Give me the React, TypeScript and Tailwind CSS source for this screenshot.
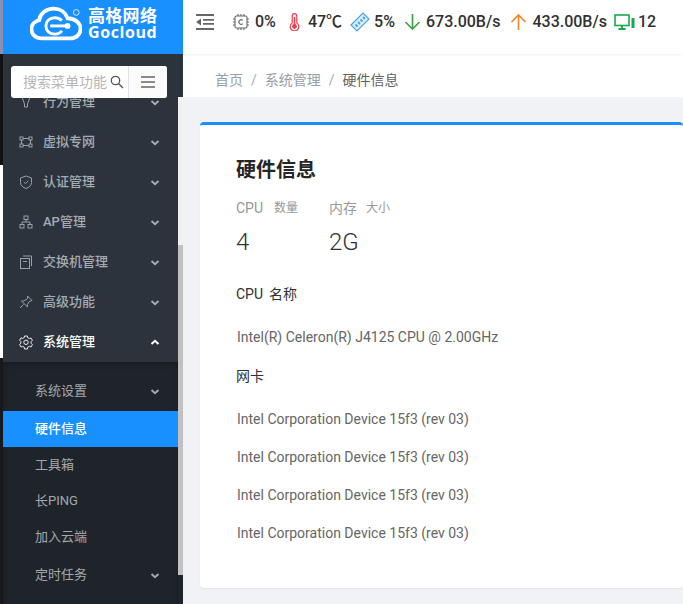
import React from "react";

const FONT = "font-['Roboto','Noto_Sans_CJK_SC',sans-serif]";

const Chevron = ({ up = false, className = "" }: { up?: boolean; className?: string }) => (
  <svg width="10" height="7" viewBox="0 0 10 7" fill="none" className={className}>
    <path d={up ? "M1.5 5L5 1.8L8.5 5" : "M1.5 2L5 5.2L8.5 2"} stroke="currentColor" strokeWidth="2" />
  </svg>
);

const icons: Record<string, React.ReactNode> = {
  bulb: <path d="M3 2h8l-2.5 7v3h-3V9z" />,
  vpn: (
    <>
      <rect x="1" y="2" width="3" height="3" />
      <rect x="10" y="2" width="3" height="3" />
      <rect x="1" y="9" width="3" height="3" />
      <rect x="10" y="9" width="3" height="3" />
      <path d="M4 3.5h6M4 10.5h6M2.5 5v4M11.5 5v4" />
    </>
  ),
  shield: (
    <>
      <path d="M7 1l5.5 2v4.5c0 3-2.5 5-5.5 6-3-1-5.5-3-5.5-6V3z" />
      <path d="M4.8 7l1.7 1.7 2.8-3" />
    </>
  ),
  tree: (
    <>
      <rect x="5" y="1" width="4" height="3.5" />
      <rect x="1" y="9.5" width="4" height="3.5" />
      <rect x="9" y="9.5" width="4" height="3.5" />
      <path d="M7 4.5V7M3 9.5V7h8v2.5" />
    </>
  ),
  copy: (
    <>
      <rect x="1.5" y="3.5" width="9" height="10" />
      <path d="M4 1h8.5v10M4 6.5h4" />
    </>
  ),
  pin: <path d="M8.5 1L13 5.5l-2.5.8-2.2 3.4.2 2.3-6-6 2.4-.1 3.6-2.2zM4.5 9.5L1 13" />,
  gear: (
    <>
      <path d="M5.6 1h2.8l.4 1.8 1.5.8 1.7-.6 1.4 2.4-1.3 1.3v1.6l1.3 1.3-1.4 2.4-1.7-.6-1.5.8-.4 1.8H5.6l-.4-1.8-1.5-.8-1.7.6L.6 9.4l1.3-1.3V6.5L.6 5.2 2 2.8l1.7.6 1.5-.8z" />
      <circle cx="7" cy="7.3" r="2.2" />
    </>
  ),
};

const MenuRow = ({ icon, label, open = false }: { icon: string; label: string; open?: boolean }) => (
  <div className={`flex h-10 items-center pl-4 pr-[18px] text-[13px] font-medium ${open ? "text-white" : "text-[#a5acb4]"}`}>
    <svg width="14" height="15" viewBox="0 0 14 15" fill="none" stroke="currentColor" strokeWidth="1" className="mr-[10px] shrink-0 opacity-90">
      {icons[icon]}
    </svg>
    <span className="flex-1">{label}</span>
    <Chevron up={open} />
  </div>
);

const SubRow = ({ label, active = false, arrow = false }: { label: string; active?: boolean; arrow?: boolean }) => (
  <div
    className={`flex items-center pl-8 pr-[18px] text-[13px] ${arrow ? "h-10" : "h-9"} ${
      active ? "bg-[#1890ff] font-medium text-white" : "text-[#a3a8ad]"
    }`}
  >
    <span className="flex-1">{label}</span>
    {arrow && <Chevron />}
  </div>
);

const Logo = () => (
  <div className="flex h-[54px] shrink-0 items-center bg-[#1890ff] pb-[7px] pl-[27px] text-white">
    <svg width="52" height="36" viewBox="0 0 54 36" className="mr-[6px] shrink-0">
      <path
        d="M12 33C5.5 33 1.5 28.5 1.5 23.5C1.5 18.5 5 15 9.5 14C10.5 7 17 2 24.5 2C31.5 2 37 6 39 12C46.5 12 52.5 17 52.5 23C52.5 29 47.5 33 42 33Z"
        fill="none"
        stroke="#fff"
        strokeWidth="4"
      />
      <path d="M33 14.5C31 12.5 28.5 11.5 25.5 11.5C20.5 11.5 16.5 15 16.5 20C16.5 25 20.5 28.5 25.5 28.5C28.5 28.5 31.5 27.5 33 25" fill="none" stroke="#fff" strokeWidth="3" />
      <path d="M21 20H38" stroke="#fff" strokeWidth="3" />
      <circle cx="39" cy="20" r="3" fill="#fff" />
      <circle cx="48" cy="6" r="3" fill="none" stroke="#fff" strokeWidth="0.8" />
    </svg>
    <div className="flex flex-col">
      <span className="text-[17px] leading-[16px] font-bold tracking-[0.3px]">高格网络</span>
      <span className="font-['Open_Sans',sans-serif] text-[16px] leading-[16px] font-bold tracking-[0.6px]">Gocloud</span>
    </div>
  </div>
);

const Sidebar = () => (
  <aside className="flex h-full w-[180px] shrink-0 flex-col">
    <Logo />
    <div className="relative flex min-h-0 flex-1 overflow-hidden bg-[#2c333c]">
      <div className="w-[175px] shrink-0 pt-[28px]">
        <MenuRow icon="bulb" label="行为管理" />
        <MenuRow icon="vpn" label="虚拟专网" />
        <MenuRow icon="shield" label="认证管理" />
        <MenuRow icon="tree" label="AP管理" />
        <MenuRow icon="copy" label="交换机管理" />
        <MenuRow icon="pin" label="高级功能" />
        <MenuRow icon="gear" label="系统管理" open />
        <div className="bg-[#1f242b] pt-[9px] pb-[20px] shadow-[inset_0_2px_6px_rgba(0,0,0,0.25)]">
          <SubRow label="系统设置" arrow />
          <SubRow label="硬件信息" active />
          <SubRow label="工具箱" />
          <SubRow label="长PING" />
          <SubRow label="加入云端" />
          <SubRow label="定时任务" arrow />
        </div>
      </div>
      <div className="flex w-[5px] shrink-0 flex-col bg-[#1f242b]">
        <div className="h-[191px] bg-[#f1f1f1]" />
        <div className="h-[330px] bg-[#c1c1c1]" />
      </div>
      <div className="absolute top-0 left-0 h-[43px] w-full bg-[#2c333c] pt-[12px] pl-[8px]">
        <div className="flex h-8 w-[156px] overflow-hidden rounded-[3px] bg-white">
          <div className="flex w-[118px] items-center border-r border-[#dcdfe6] pl-3 text-[14px] text-[#b5b5b5]">
            <span className="whitespace-nowrap">搜索菜单功能</span>
            <svg width="14" height="14" viewBox="0 0 14 14" fill="none" stroke="#555" strokeWidth="1.3" className="ml-[3px] shrink-0">
              <circle cx="5.5" cy="5.5" r="4.2" />
              <path d="M8.7 8.7L13 13" />
            </svg>
          </div>
          <div className="flex flex-1 items-center justify-center bg-[#fbfbfb]">
            <svg width="14" height="12" viewBox="0 0 14 12" stroke="#666" strokeWidth="1.3">
              <path d="M0 1h14M0 6h14M0 11h14" />
            </svg>
          </div>
        </div>
      </div>
    </div>
  </aside>
);

const Stat = ({ icon, text, gap, ml }: { icon: React.ReactNode; text: string; gap: string; ml: string }) => (
  <div className={`flex items-center ${ml}`}>
    <span className={`flex ${gap}`}>{icon}</span>
    <span className="text-[16px] leading-none font-medium text-[#303133]">{text}</span>
  </div>
);

const Header = () => (
  <header className="z-10 flex h-[54px] shrink-0 items-center bg-white pb-[10px] pl-[13px] shadow-[0_1px_3px_rgba(0,0,0,0.06)]">
    <svg width="18" height="16" viewBox="0 0 18 16" fill="#666" className="mr-[18px] shrink-0">
      <path d="M0 0h18v2H0zM7 5h11v1.8H7zM7 9h11v1.8H7zM0 14h18v2H0zM0 8l5-3.5v7z" />
    </svg>
    <Stat
      ml=""
      gap="mr-[5px]"
      text="0%"
      icon={
        <svg width="18" height="18" viewBox="0 0 18 18" fill="none" stroke="#666" strokeWidth="1.1">
          <rect x="3" y="3" width="12" height="12" rx="1.5" />
          <path d="M6 1v2M9 1v2M12 1v2M6 15v2M9 15v2M12 15v2M1 6h2M1 9h2M1 12h2M15 6h2M15 9h2M15 12h2" />
          <path d="M10.8 7.3A2.3 2.3 0 1 0 10.8 10.7" />
        </svg>
      }
    />
    <Stat
      ml="ml-[13px]"
      gap="mr-[8px]"
      text="47℃"
      icon={
        <svg width="11" height="18" viewBox="0 0 11 18" fill="none" stroke="#e8404f" strokeWidth="1.2">
          <path d="M3.2 10V3a2.3 2.3 0 0 1 4.6 0v7a4.3 4.3 0 1 1-4.6 0z" />
          <circle cx="5.5" cy="13.5" r="1.8" fill="#e8404f" />
          <path d="M5.5 4v9" strokeWidth="1.6" />
        </svg>
      }
    />
    <Stat
      ml="ml-[8px]"
      gap="mr-[4px]"
      text="5%"
      icon={
        <svg width="20" height="20" viewBox="0 0 20 20" fill="none" stroke="#4aa3e0" strokeWidth="1.2">
          <path d="M1 13L13 1l6 6L7 19z" fill="#d9eefb" />
          <path d="M5.5 12.5l2 2M8 10l2 2M10.5 7.5l2 2M13 5l2 2" strokeWidth="1.8" />
        </svg>
      }
    />
    <Stat
      ml="ml-[9px]"
      gap="mr-[5px]"
      text="673.00B/s"
      icon={
        <svg width="17" height="18" viewBox="0 0 17 18" fill="none" stroke="#43a047" strokeWidth="1.7">
          <path d="M8.5 1v15M1.5 9l7 7 7-7" />
        </svg>
      }
    />
    <Stat
      ml="ml-[10px]"
      gap="mr-[5px]"
      text="433.00B/s"
      icon={
        <svg width="17" height="18" viewBox="0 0 17 18" fill="none" stroke="#f08a2c" strokeWidth="1.7">
          <path d="M8.5 17V2M1.5 9l7-7 7 7" />
        </svg>
      }
    />
    <Stat
      ml="ml-[7px]"
      gap="mr-[3px]"
      text="12"
      icon={
        <svg width="21" height="16" viewBox="0 0 21 16" fill="none" stroke="#19a84c" strokeWidth="1.6">
          <rect x="1" y="1" width="14" height="10.5" />
          <path d="M8 12v2M4.5 15h7" strokeWidth="1.8" />
          <rect x="17.5" y="4" width="3" height="10" fill="#19a84c" stroke="none" />
        </svg>
      }
    />
  </header>
);

const Breadcrumb = () => (
  <div className="flex h-[43px] shrink-0 items-center bg-white pt-[10px] pl-8 text-[14px] text-[#97a0a8]">
    <span>首页</span>
    <span className="mx-[8px] text-[#a8abb2]">/</span>
    <span>系统管理</span>
    <span className="mx-[8px] text-[#a8abb2]">/</span>
    <span className="text-[#606266]">硬件信息</span>
  </div>
);

const lines = ["a", "b", "c", "d"];

const HardwareCard = () => (
  <section className="h-[466px] rounded-[4px] border-t-[3px] border-[#1890ff] bg-white pt-[31px] pl-9 shadow-[0_1px_2px_rgba(0,0,0,0.05)]">
    <h1 className="text-[20px] leading-[28px] font-bold text-[#262626]">硬件信息</h1>
    <div className="mt-[14px] flex text-[#999]">
      <div className="w-[93px]">
        <div className="flex items-center text-[14px] leading-[20px]">
          <span>CPU</span>
          <span className="ml-[11px] text-[12px]">数量</span>
        </div>
        <div className="mt-[8px] text-[24px] leading-[32px] font-light text-[#33303a]">4</div>
      </div>
      <div>
        <div className="flex items-center text-[14px] leading-[20px]">
          <span>内存</span>
          <span className="ml-[9px] text-[12px]">大小</span>
        </div>
        <div className="mt-[8px] text-[24px] leading-[32px] font-light text-[#33303a]">2G</div>
      </div>
    </div>
    <div className="mt-[26px] flex items-center text-[14px] leading-[20px] text-[#303133]">
      <span>CPU</span>
      <span className="ml-[6px]">名称</span>
    </div>
    <p className="mt-[23px] pl-px text-[14px] leading-[20px] text-[#666]">Intel(R) Celeron(R) J4125 CPU @ 2.00GHz</p>
    <div className="mt-[19px] text-[14px] leading-[20px] text-[#303133]">网卡</div>
    <div className="mt-[23px] flex flex-col gap-[18px] pl-px text-[14px] leading-[20px] text-[#666]">
      {lines.map((key) => (
        <p key={key}>Intel Corporation Device 15f3 (rev 03)</p>
      ))}
    </div>
  </section>
);

export default function App() {
  return (
    <div className={`flex h-[604px] w-[683px] overflow-hidden bg-[#f0f2f5] ${FONT}`}>
      <div className="flex w-[3px] shrink-0 flex-col">
        <div className="h-[54px] bg-[#8b8fb5]" />
        <div className="h-[111px] bg-[#111113]" />
        <div className="h-[193px] bg-white" />
        <div className="flex-1 bg-[#16181b]" />
      </div>
      <Sidebar />
      <main className="flex min-w-0 flex-1 flex-col">
        <Header />
        <Breadcrumb />
        <div className="pt-[25px] pl-[17px]">
          <HardwareCard />
        </div>
      </main>
    </div>
  );
}
